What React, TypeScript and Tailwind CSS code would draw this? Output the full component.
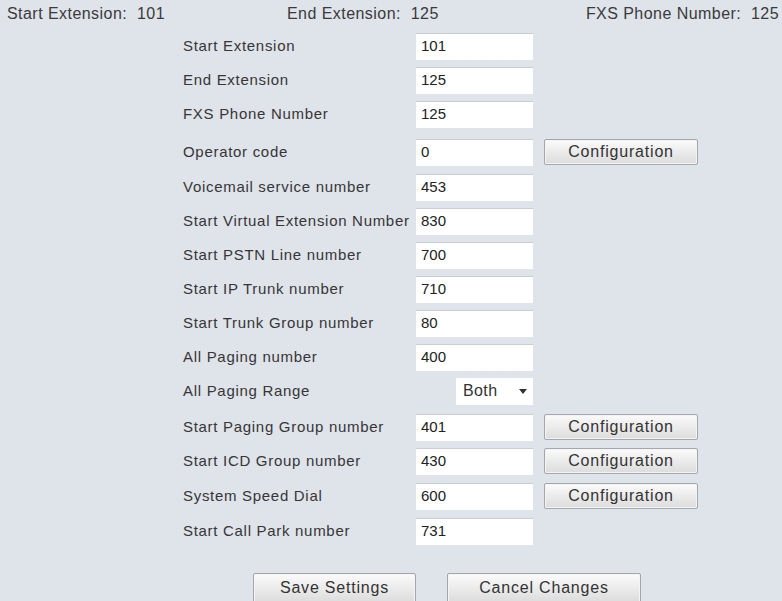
import React from 'react';

type Row = {
  label: string;
  value: string;
  config?: boolean;
  select?: boolean;
  gap?: string;
};

const rows: Row[] = [
  { label: 'Start Extension', value: '101' },
  { label: 'End Extension', value: '125' },
  { label: 'FXS Phone Number', value: '125' },
  { label: 'Operator code', value: '0', config: true, gap: 'mt-[4px]' },
  { label: 'Voicemail service number', value: '453', gap: 'mt-[1px]' },
  { label: 'Start Virtual Extension Number', value: '830' },
  { label: 'Start PSTN Line number', value: '700' },
  { label: 'Start IP Trunk number', value: '710' },
  { label: 'Start Trunk Group number', value: '80' },
  { label: 'All Paging number', value: '400' },
  { label: 'All Paging Range', value: 'Both', select: true },
  { label: 'Start Paging Group number', value: '401', config: true, gap: 'mt-[2px]' },
  { label: 'Start ICD Group number', value: '430', config: true },
  { label: 'System Speed Dial', value: '600', config: true, gap: 'mt-[1px]' },
  { label: 'Start Call Park number', value: '731', gap: 'mt-[1px]' },
];

function GrayButton({ children, className }: { children: React.ReactNode; className: string }) {
  return (
    <button
      className={`h-[26px] rounded-[2px] border border-[#a3a6ab] bg-gradient-to-b from-[#fbfbfb] to-[#dcdcdc] text-[16px] tracking-[0.8px] text-[#333] shadow-[inset_0_0_0_1px_#f4f4f4] ${className}`}
    >
      {children}
    </button>
  );
}

export default function App() {
  return (
    <div
      className="w-[782px] h-[601px] overflow-hidden bg-[#dfe3ea] text-[#333]"
      style={{ fontFamily: '"Liberation Sans", Arial, sans-serif' }}
    >
      {/* Summary line */}
      <div className="flex h-[28px] items-center text-[16px] tracking-[0.45px] text-[#3a3a3a]">
        <span className="ml-[7px]">Start Extension:&nbsp;&nbsp;101</span>
        <span className="ml-[122px]">End Extension:&nbsp;&nbsp;125</span>
        <span className="ml-auto mr-[3px]">FXS Phone Number:&nbsp;&nbsp;125</span>
      </div>

      {/* Settings rows */}
      <div className="mt-[1px] flex flex-col">
        {rows.map((r) => (
          <div key={r.label} className={`flex h-[34px] items-center ${r.gap ?? ''}`}>
            <div className="ml-[183px] w-[233px] whitespace-nowrap text-[15px] tracking-[0.7px] text-[#363636]">
              {r.label}
            </div>
            {r.select ? (
              <div className="ml-[40px] flex h-[27px] w-[77px] items-center justify-between bg-white pl-[7px] pr-[6px] text-[16px] tracking-[0.4px]">
                <span>Both</span>
                <svg width="8" height="5" viewBox="0 0 8 5">
                  <path d="M0 0h8L4 5z" fill="#333" />
                </svg>
              </div>
            ) : (
              <div className="flex h-[27px] w-[117px] items-center border-t border-[#c9ccd1] bg-white pl-[5px] text-[15px] text-[#222]">
                {r.value}
              </div>
            )}
            {r.config && <GrayButton className="ml-[11px] w-[154px]">Configuration</GrayButton>}
          </div>
        ))}
      </div>

      {/* Actions */}
      <div className="mt-[25px] flex">
        <GrayButton className="ml-[253px] h-[30px] w-[163px]">Save Settings</GrayButton>
        <GrayButton className="ml-[31px] h-[30px] w-[194px]">Cancel Changes</GrayButton>
      </div>
    </div>
  );
}
